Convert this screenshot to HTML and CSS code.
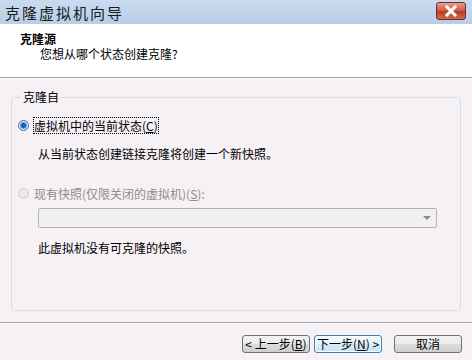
FILE: index.html
```html
<!DOCTYPE html>
<html lang="zh-CN">
<head>
<meta charset="UTF-8" />
<title>克隆虚拟机向导</title>
<link rel="stylesheet" href="styles.css">
</head>
<body>
<div class="wizard">
  <div class="titlebar">
    <span class="title">克隆虚拟机向导</span>
    <button type="button" class="close" aria-label="关闭">
      <svg width="14" height="12" viewBox="0 0 14 12"><path d="M3 2 L11 10 M11 2 L3 10" stroke="#fff" stroke-width="3" stroke-linecap="square"/></svg>
    </button>
  </div>
  <div class="header">
    <div class="head-title">克隆源</div>
    <div class="head-sub">您想从哪个状态创建克隆?</div>
  </div>
  <div class="content">
    <fieldset class="group">
      <legend>克隆自</legend>
      <label class="radio">
        <span class="dot checked"></span>
        <span class="focus">虚拟机中的当前状态(<u>C</u>)</span>
      </label>
      <p class="note">从当前状态创建链接克隆将创建一个新快照。</p>
      <label class="radio disabled">
        <span class="dot"></span>
        <span>现有快照(仅限关闭的虚拟机)(<u>S</u>):</span>
      </label>
      <div class="combo">
        <span class="arrow"></span>
      </div>
      <p class="note">此虚拟机没有可克隆的快照。</p>
    </fieldset>
  </div>
  <div class="footer">
    <button type="button" class="btn">&lt; 上一步(<u>B</u>)</button>
    <button type="button" class="btn primary">下一步(<u>N</u>) &gt;</button>
    <button type="button" class="btn cancel">取消</button>
  </div>
</div>
</body>
</html>
```
FILE: styles.css
```css
/* --- BASE --- */
* { box-sizing: border-box; }
body {
  margin: 0;
  background: #f5f1f5;
  font-family: "Noto Sans CJK SC", sans-serif;
  font-size: 12px;
  color: #000;
}
.wizard {
  width: 472px;
  height: 360px;
  display: flex;
  flex-direction: column;
  background: #f5f1f5;
}
/* --- TITLE BAR --- */
.titlebar {
  height: 24px;
  background: linear-gradient(#c9dbef, #b8cee8);
  display: flex;
  align-items: center;
  justify-content: space-between;
  padding: 0 6px 0 5px;
}
.title {
  font-size: 15px;
  letter-spacing: 2px;
  color: #1a1a1a;
}
.close {
  width: 30px;
  height: 18px;
  border: 1px solid #6b2d2a;
  border-radius: 3px;
  background: linear-gradient(#e8a08e, #d0553c 50%, #b93a22 51%, #d46a4e);
  display: flex;
  align-items: center;
  justify-content: center;
  padding: 0;
  margin-top: -2px;
}
/* --- HEADER --- */
.header {
  height: 54px;
  background: #fff;
  border-bottom: 1px solid #a0a0a0;
  box-shadow: 0 1px 0 #fff;
  padding: 7px 0 0 20px;
  line-height: 15px;
}
.head-title { font-weight: bold; }
.head-sub { padding-left: 20px; }
/* --- CONTENT --- */
.content {
  flex: 1;
  padding: 12px 11px 0 11px;
}
.group {
  margin: 0;
  height: 221px;
  border: 1px solid #d5dfe5;
  border-radius: 3px;
  padding: 14px 0 0 6px;
}
.group legend {
  padding: 0 2px;
  margin-left: 3px;
  line-height: 14px;
}
.radio {
  display: flex;
  align-items: center;
  gap: 5px;
  line-height: 15px;
}
.radio.disabled { color: #8d8d8d; margin-top: 25px; }
.dot {
  width: 11px;
  height: 11px;
  border-radius: 50%;
  border: 1px solid #aab2ba;
  background: radial-gradient(#f2f2f2, #d8d8d8);
}
.dot.checked {
  border-color: #3a6ea5;
  background: radial-gradient(circle, #1d5fb0 0 2px, #62a0e6 3px, #e3eef9 4px);
}
.radio.disabled .dot { border-color: #cfcfcf; background: #eaeaea; }
.focus { outline: 1px dotted #000; }
.note {
  margin: 13px 0 0 20px;
  line-height: 15px;
}
.combo {
  margin: 7px 23px 0 20px;
  height: 20px;
  border: 1px solid #b4b4b4;
  border-radius: 2px;
  background: #f0f0f0;
  display: flex;
  justify-content: flex-end;
  align-items: center;
  padding-right: 5px;
}
.arrow {
  border-left: 4px solid transparent;
  border-right: 4px solid transparent;
  border-top: 4px solid #8a8a8a;
}
.combo + .note { margin-top: 12px; }
/* --- FOOTER --- */
.footer {
  height: 38px;
  border-top: 1px solid #a0a0a0;
  box-shadow: inset 0 1px 0 #fff;
  display: flex;
  justify-content: flex-end;
  align-items: flex-start;
  padding: 12px 10px 0 0;
  gap: 4px;
}
.btn {
  width: 68px;
  height: 18px;
  font-family: inherit;
  font-size: 12px;
  padding: 0;
  line-height: 14px;
  border: 1px solid #707070;
  border-radius: 3px;
  background: linear-gradient(#f2f2f2, #ebebeb 50%, #dddddd 51%, #cfcfcf);
  color: #000;
}
.btn.primary {
  border-color: #3c7fb1;
  box-shadow: inset 0 0 0 1px #fff;
  background: linear-gradient(#f4fafe, #e6f4fc 50%, #d4ecfb 51%, #c4e4f7);
}
.btn.cancel { margin-left: 8px; }
```
